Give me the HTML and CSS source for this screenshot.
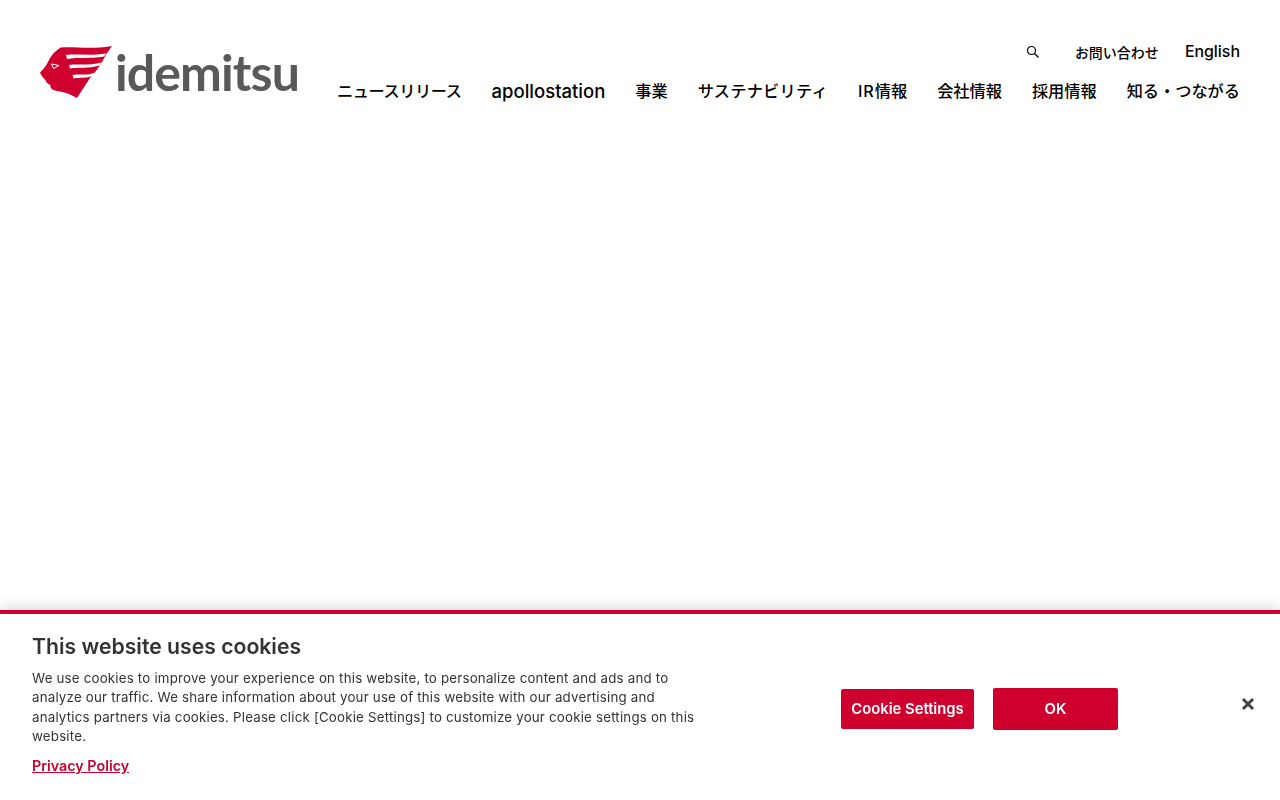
FILE: index.html
```html
<!DOCTYPE html>
<html lang="ja">
<head>
    <meta charset="UTF-8">
    <title>idemitsu</title>
    <link rel="stylesheet" href="styles.css">
</head>
<body>
    <!-- Header -->
    <header class="site-header">
        <a class="logo" href="#">
            <svg class="logo-mark" viewBox="0 0 73 54" width="73" height="54">
                <path class="mark-red" d="M20.500 2.500C34 1 48 5 72 1L66 9.500L62 17L56 26L50 33L37 53L30 49.500C25 47 20 46.500 15 45.500C11 44.500 10 42 10.500 40C8 39 6 37.500 5.500 35C3 33 1 30 0 27.500C3 24.500 6 21.500 8 17C10.500 11 15 6 20.500 2.500Z"/>
                <path class="mark-white" d="M26 10C38 8.500 50 11 66 8.500L64 11.500C50 14 38 12 27 14Z"/>
                <path class="mark-white" d="M29 20C38 18.500 48 21 61.500 17.500L59.500 20.500C48 24 38 22 30 23.500Z"/>
                <path class="mark-white" d="M32.500 30C40 28.500 47 31 55.500 27.500L53.500 30.500C46 34 40 32 33.500 33.500Z"/>
                <path class="mark-eye" d="M11.500 19L19 20.500L13.500 23.500Z"/>
            </svg>
            <span class="logo-text">idemitsu</span>
        </a>
        <div class="header-nav">
            <div class="sub-nav">
                <a class="search-link" href="#">
                    <svg viewBox="0 0 14 14" width="14" height="14">
                        <circle cx="5.500" cy="5.500" r="4"/>
                        <line x1="8.500" y1="8.500" x2="12.500" y2="12.500"/>
                    </svg>
                </a>
                <a class="sub-contact" href="#">お問い合わせ</a>
                <a class="sub-english" href="#">English</a>
            </div>
            <nav class="main-nav">
                <a class="nav-news" href="#">ニュースリリース</a>
                <a class="nav-latin" href="#">apollostation</a>
                <a href="#">事業</a>
                <a class="nav-sustain" href="#">サステナビリティ</a>
                <a class="nav-ir" href="#"><span>IR</span>情報</a>
                <a href="#">会社情報</a>
                <a href="#">採用情報</a>
                <a href="#">知る・つながる</a>
            </nav>
        </div>
    </header>

    <!-- Cookie banner -->
    <section class="cookie-banner">
        <div class="cookie-text">
            <h2>This website uses cookies</h2>
            <p>We use cookies to improve your experience on this website, to personalize content and ads and to analyze our traffic. We share information about your use of this website with our advertising and analytics partners via cookies. Please click [Cookie Settings] to customize your cookie settings on this website.</p>
            <a class="policy-link" href="#">Privacy Policy</a>
        </div>
        <div class="cookie-actions">
            <button class="btn btn-settings" type="button">Cookie Settings</button>
            <button class="btn btn-ok" type="button">OK</button>
        </div>
        <button class="cookie-close" type="button" aria-label="Close">
            <svg viewBox="0 0 14 14" width="14" height="14">
                <line x1="2" y1="2" x2="12" y2="12"/>
                <line x1="12" y1="2" x2="2" y2="12"/>
            </svg>
        </button>
    </section>
</body>
</html>
```

FILE: styles.css
```css
body {
    margin: 0;
    height: 800px;
    overflow: hidden;
    background-color: #fff;
    color: #000;
    font-family: "Inter", "Noto Sans CJK JP", sans-serif;
}
a {
    color: inherit;
    text-decoration: none;
}
.site-header {
    display: flex;
    justify-content: space-between;
    padding: 43px 40px 0;
}
.logo {
    display: flex;
    align-items: flex-start;
    padding-top: 2px;
}
.logo-mark {
    display: block;
}
.mark-red {
    fill: #d0002e;
}
.mark-white {
    fill: #fff;
}
.mark-eye {
    fill: none;
    stroke: #fff;
    stroke-width: 1;
}
.logo-text {
    margin-left: 2px;
    color: #58595b;
    font-family: "Lato", sans-serif;
    font-size: 50px;
    font-weight: 700;
    line-height: 54px;
    letter-spacing: -.9px;
}
.header-nav {
    display: flex;
    flex-direction: column;
    align-items: flex-end;
}
.sub-nav {
    display: flex;
    align-items: center;
    gap: 25px;
    height: 17px;
    font-size: 14px;
    font-weight: 500;
}
.sub-contact {
    margin-right: 1px;
}
.sub-english {
    font-size: 15.900px;
}
.search-link {
    display: flex;
    margin-right: 10px;
}
.search-link svg {
    fill: none;
    stroke: #000;
    stroke-width: 1.200;
}
.main-nav {
    display: flex;
    gap: 30px;
    margin-top: 19px;
    font-size: 16.200px;
    font-weight: 500;
    line-height: 24px;
}
.nav-news {
    letter-spacing: -.4px;
}
.nav-latin {
    font-size: 18.500px;
}
.nav-sustain {
    letter-spacing: .25px;
}
.nav-ir span {
    letter-spacing: 1px;
}
.cookie-banner {
    position: fixed;
    left: 0;
    right: 0;
    bottom: 0;
    display: flex;
    align-items: flex-start;
    box-sizing: border-box;
    height: 190px;
    padding: 18px 32px 0;
    background-color: #fff;
    border-top: 4px solid #c8002f;
    box-shadow: 0 0 18px rgba(0,0,0,.2);
    color: #333;
}
.cookie-text {
    width: 665px;
}
.cookie-text h2 {
    margin: 0 0 9px;
    font-size: 21.200px;
    font-weight: 600;
    line-height: 28px;
}
.cookie-text p {
    margin: 0 0 9px;
    font-size: 13.300px;
    line-height: 19.300px;
    letter-spacing: .2px;
}
.policy-link {
    color: #c8002f;
    font-size: 14.300px;
    font-weight: 600;
    text-decoration: underline;
}
.cookie-actions {
    display: flex;
    align-items: center;
    gap: 19px;
    margin-top: 56px;
    margin-left: 144px;
}
.btn {
    border: none;
    border-radius: 2px;
    background-color: #d0002e;
    color: #fff;
    font-family: inherit;
    font-size: 14.800px;
    font-weight: 600;
}
.btn-settings {
    width: 133px;
    height: 40px;
}
.btn-ok {
    width: 125px;
    height: 42px;
}
.cookie-close {
    position: absolute;
    top: 83px;
    right: 25px;
    display: flex;
    padding: 0;
    border: none;
    background: none;
}
.cookie-close svg {
    stroke: #444;
    stroke-width: 3;
}
```
